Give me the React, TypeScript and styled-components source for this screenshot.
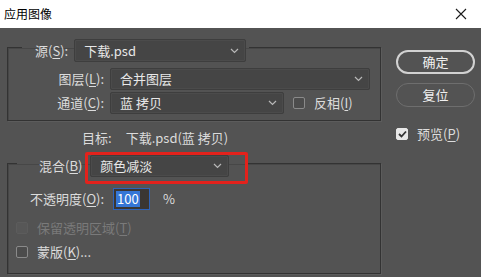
import React from "react";
import styled, { createGlobalStyle } from "styled-components";

const GlobalStyle = createGlobalStyle`
  html, body {
    margin: 0;
    padding: 0;
    background: #535353;
  }
  body {
    font-family: "Noto Sans CJK SC", "Noto Sans", sans-serif;
    font-size: 13px;
  }
`;

const Dialog = styled.div`
  width: 481px;
  height: 277px;
  display: flex;
  flex-direction: column;
  overflow: hidden;
`;

const TitleBar = styled.div`
  height: 28px;
  flex-shrink: 0;
  background: #ffffff;
  display: flex;
  align-items: center;
  justify-content: space-between;
  padding: 0 14px 1px 4px;
  box-sizing: border-box;
  color: #000000;
  font-size: 12px;
  line-height: 14px;
`;

const Body = styled.div`
  height: 249px;
  box-sizing: border-box;
  background: #535353;
  display: flex;
  align-items: flex-start;
  padding: 4px 0 0 7px;
  color: #dcdcdc;
`;

const LeftColumn = styled.div`
  width: 374px;
  flex-shrink: 0;
  display: flex;
  flex-direction: column;
`;

const RightColumn = styled.div`
  width: 79px;
  margin-left: 15px;
  padding-top: 18px;
  display: flex;
  flex-direction: column;
`;

const Group = styled.fieldset`
  margin: 0;
  padding: 0;
  min-width: 0;
  width: 374px;
  flex-shrink: 0;
  box-sizing: border-box;
  border: 1px solid #333333;
  box-shadow: 1px 1px 0 #5c5c5c, inset 1px 1px 0 #474747;
`;

const Legend = styled.legend<{ $ml: number; $pl: number; $pr: number; $pt: number }>`
  margin-left: ${(p) => p.$ml}px;
  padding: ${(p) => p.$pt}px ${(p) => p.$pr}px 0 ${(p) => p.$pl}px;
  display: flex;
  align-items: center;
  line-height: 16px;
`;

const GroupBody = styled.div<{ $pt: number; $pb: number }>`
  display: flex;
  flex-direction: column;
  gap: 2px;
  padding: ${(p) => p.$pt}px 0 ${(p) => p.$pb}px 0;
`;

const Row = styled.div<{ $indent?: number; $h?: number; $mt?: number }>`
  display: flex;
  align-items: center;
  flex-shrink: 0;
  height: ${(p) => p.$h ?? 22}px;
  margin-top: ${(p) => p.$mt ?? 0}px;
  padding-left: ${(p) => p.$indent ?? 0}px;
  line-height: 16px;
  white-space: nowrap;
`;

const Label = styled.span<{ $w?: number; $gap?: number; $right?: boolean }>`
  width: ${(p) => (p.$w ? `${p.$w}px` : "auto")};
  margin-right: ${(p) => p.$gap ?? 6}px;
  text-align: ${(p) => (p.$right ? "right" : "left")};
  color: #dcdcdc;
  flex-shrink: 0;
`;

const Key = styled.u`
  text-decoration-thickness: 1px;
  text-underline-offset: 2px;
`;

const Select = styled.div<{ $w: number; $h?: number }>`
  width: ${(p) => p.$w}px;
  height: ${(p) => p.$h ?? 22}px;
  box-sizing: border-box;
  background: #454545;
  border: 1px solid #3e3e3e;
  box-shadow: inset 0 0 0 1px #4b4b4b;
  border-radius: 2px;
  display: flex;
  align-items: center;
  justify-content: space-between;
  padding: 0 6px 0 9px;
  color: #e8e8e8;
  flex-shrink: 0;
`;

const Spacer = styled.span<{ $w: number }>`
  width: ${(p) => p.$w}px;
  flex-shrink: 0;
`;

const Highlight = styled.div`
  position: relative;
  &::after {
    content: "";
    position: absolute;
    left: -5px;
    top: -3px;
    right: -19px;
    bottom: -7px;
    border: 3px solid #e3221c;
    border-radius: 2px;
    pointer-events: none;
  }
`;

const TargetRow = styled.div`
  display: flex;
  align-items: center;
  flex-shrink: 0;
  height: 20px;
  margin: 7px 0 1px 0;
  padding-left: 75px;
  color: #dcdcdc;
  line-height: 16px;
`;

const Box = styled.span<{ $disabled?: boolean; $checked?: boolean }>`
  width: 12px;
  height: 12px;
  box-sizing: border-box;
  border-radius: 2px;
  flex-shrink: 0;
  display: flex;
  align-items: center;
  justify-content: center;
  border: 1px solid ${(p) => (p.$disabled ? "#5c5c5c" : p.$checked ? "#e8e8e8" : "#8a8a8a")};
  background: ${(p) => (p.$disabled ? "#575757" : p.$checked ? "#e8e8e8" : "#4c4c4c")};
`;

const CheckText = styled.span<{ $disabled?: boolean }>`
  margin-left: 9px;
  color: ${(p) => (p.$disabled ? "#7a7a7a" : "#dcdcdc")};
`;

const NumberInput = styled.div`
  width: 37px;
  height: 22px;
  box-sizing: border-box;
  border: 1px solid #2e63b8;
  background: #3a3632;
  display: flex;
  align-items: center;
  padding-left: 2px;
`;

const Selected = styled.span`
  background: #3576d6;
  color: #ffffff;
  padding: 0 1px;
  line-height: 16px;
`;

const Percent = styled.span`
  margin-left: 13px;
  color: #dcdcdc;
`;

const PillButton = styled.div<{ $primary?: boolean }>`
  height: 24px;
  box-sizing: border-box;
  border-radius: 12px;
  border: ${(p) => (p.$primary ? "2px solid #d2d2d2" : "1.5px solid #6e6e6e")};
  display: flex;
  align-items: center;
  justify-content: center;
  color: #f0f0f0;
  line-height: 16px;
  margin-bottom: 9px;
`;

const PreviewRow = styled.div`
  display: flex;
  align-items: center;
  margin-top: 10px;
  line-height: 16px;
`;

const Chevron = () => (
  <svg width="9" height="6" viewBox="0 0 9 6">
    <path d="M1 1 L4.5 4.5 L8 1" fill="none" stroke="#b8b8b8" strokeWidth="1.2" />
  </svg>
);

const CloseIcon = () => (
  <svg width="12" height="12" viewBox="0 0 12 12">
    <path d="M1 1 L11 11 M11 1 L1 11" stroke="#1a1a1a" strokeWidth="1.1" />
  </svg>
);

const CheckMark = () => (
  <svg width="9" height="8" viewBox="0 0 9 8">
    <path d="M1 4 L3.5 6.5 L8 1.5" fill="none" stroke="#333" strokeWidth="1.8" />
  </svg>
);

const Checkbox: React.FC<{ label: React.ReactNode; disabled?: boolean; checked?: boolean }> = ({
  label,
  disabled,
  checked,
}) => (
  <>
    <Box $disabled={disabled} $checked={checked}>
      {checked && <CheckMark />}
    </Box>
    <CheckText $disabled={disabled}>{label}</CheckText>
  </>
);

const App: React.FC = () => {
  return (
    <Dialog>
      <GlobalStyle />
      <TitleBar>
        <span>应用图像</span>
        <CloseIcon />
      </TitleBar>
      <Body>
        <LeftColumn>
          {/* 源 */}
          <Group>
            <Legend $ml={14} $pl={13} $pr={3} $pt={7}>
              <Label>
                源(<Key>S</Key>):
              </Label>
              <Select $w={172} $h={23}>
                <span>下载.psd</span>
                <Chevron />
              </Select>
            </Legend>
            <GroupBody $pt={6} $pb={6}>
              <Row>
                <Label $w={96} $right>
                  图层(<Key>L</Key>):
                </Label>
                <Select $w={260}>
                  <span>合并图层</span>
                  <Chevron />
                </Select>
              </Row>
              <Row>
                <Label $w={96} $right>
                  通道(<Key>C</Key>):
                </Label>
                <Select $w={174}>
                  <span>蓝 拷贝</span>
                  <Chevron />
                </Select>
                <Spacer $w={9} />
                <Checkbox
                  label={
                    <>
                      反相(<Key>I</Key>)
                    </>
                  }
                />
              </Row>
            </GroupBody>
          </Group>

          <TargetRow>
            <Label $gap={14}>目标:</Label>
            <span>下载.psd(蓝 拷贝)</span>
          </TargetRow>

          {/* 混合 */}
          <Group>
            <Legend $ml={9} $pl={22} $pr={19} $pt={6}>
              <Label $gap={8}>
                混合(<Key>B</Key>)
              </Label>
              <Highlight>
                <Select $w={139}>
                  <span>颜色减淡</span>
                  <Chevron />
                </Select>
              </Highlight>
            </Legend>
            <GroupBody $pt={11} $pb={11}>
              <Row $indent={22}>
                <Label $w={83} $gap={0}>
                  不透明度(<Key>O</Key>):
                </Label>
                <NumberInput>
                  <Selected>100</Selected>
                </NumberInput>
                <Percent>%</Percent>
              </Row>
              <Row $indent={8} $h={20} $mt={6}>
                <Checkbox
                  disabled
                  label={
                    <>
                      保留透明区域(<Key>T</Key>)
                    </>
                  }
                />
              </Row>
              <Row $indent={8} $h={20} $mt={2}>
                <Checkbox
                  label={
                    <>
                      蒙版(<Key>K</Key>)...
                    </>
                  }
                />
              </Row>
            </GroupBody>
          </Group>
        </LeftColumn>

        <RightColumn>
          <PillButton $primary>确定</PillButton>
          <PillButton>复位</PillButton>
          <PreviewRow>
            <Checkbox
              checked
              label={
                <>
                  预览(<Key>P</Key>)
                </>
              }
            />
          </PreviewRow>
        </RightColumn>
      </Body>
    </Dialog>
  );
};

export default App;
